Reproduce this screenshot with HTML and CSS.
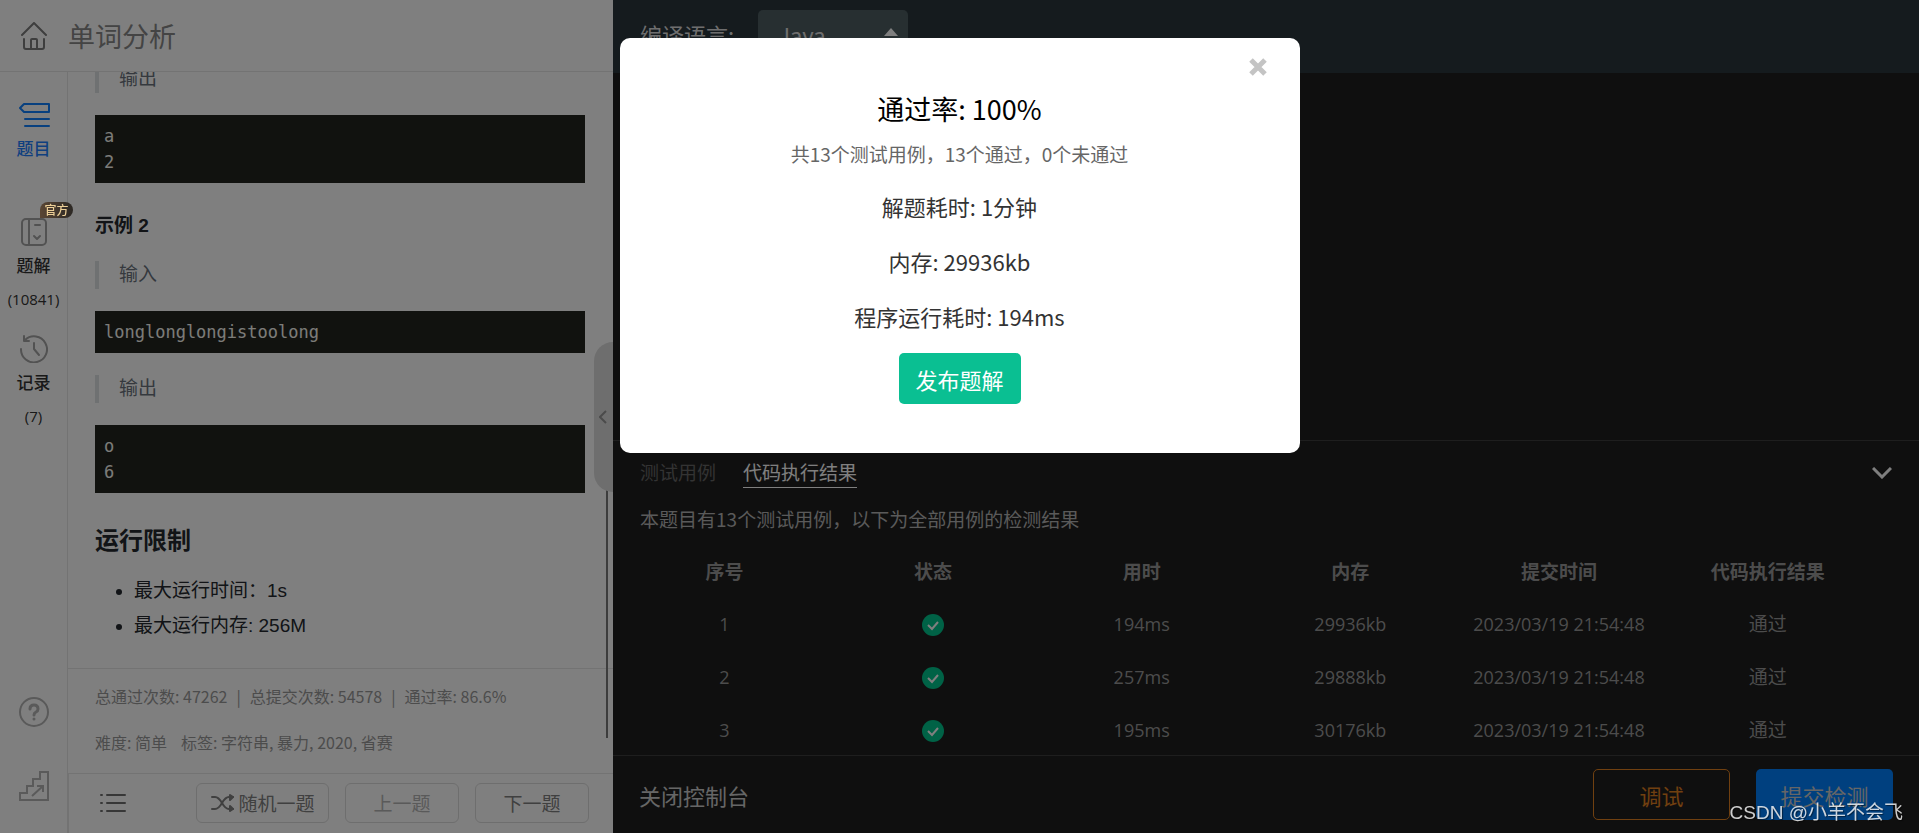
FILE: index.html
```html
<!DOCTYPE html>
<html lang="zh-CN">
<head>
    <meta charset="UTF-8">
    <meta name="viewport" content="width=device-width, initial-scale=1.0">
    <title>单词分析</title>
    <link rel="stylesheet" href="styles.css">
</head>
<body>
    <div class="page">
        <section class="left">
            <header class="left-header">
                <a href="#" class="home" aria-label="首页">
                    <svg width="28" height="28" viewBox="0 0 28 28" fill="none" stroke="#7c7c7c" stroke-width="2" stroke-linecap="round" stroke-linejoin="round">
                        <path d="M2 13 L14 1 L26 13"/>
                        <path d="M4 17 V25 Q4 27 6 27 H22 Q24 27 24 25 V17"/>
                        <path d="M11 26 V18 Q11 17 12 17 H16 Q17 17 17 18 V26"/>
                    </svg>
                </a>
                <h1>单词分析</h1>
            </header>

            <div class="left-body">
                <nav class="sidebar">
                    <a href="#" class="side-item active">
                        <span class="side-icon">
                            <svg width="32" height="26" viewBox="0 0 32 26" fill="none" stroke="#1080ff" stroke-width="2" stroke-linecap="round" stroke-linejoin="round">
                                <path d="M6 2 H31 V10 H6 L2 6 Z"/>
                                <path d="M7 17 H31 M7 24 H31"/>
                            </svg>
                        </span>
                        <span class="side-label">题目</span>
                    </a>
                    <a href="#" class="side-item">
                        <span class="badge">官方</span>
                        <span class="side-icon">
                            <svg width="26" height="28" viewBox="0 0 26 28" fill="none" stroke="#a4a4a4" stroke-width="2" stroke-linecap="round" stroke-linejoin="round">
                                <rect x="1" y="1" width="24" height="26" rx="4"/>
                                <path d="M8 1 V27 M14 7 H19 M13 18 L16 21 L19 18"/>
                            </svg>
                        </span>
                        <span class="side-label">题解</span>
                        <span class="side-count">(10841)</span>
                    </a>
                    <a href="#" class="side-item">
                        <span class="side-icon">
                            <svg width="28" height="28" viewBox="0 0 28 28" fill="none" stroke="#a4a4a4" stroke-width="2" stroke-linecap="round" stroke-linejoin="round">
                                <path d="M1 14 A13 13 0 1 0 5 5"/>
                                <path d="M4 1 V6 H9 M14 8 V14 L19 20"/>
                            </svg>
                        </span>
                        <span class="side-label">记录</span>
                        <span class="side-count">(7)</span>
                    </a>
                    <div class="side-bottom">
                        <a href="#" aria-label="帮助">
                            <svg width="30" height="30" viewBox="0 0 30 30" fill="none" stroke="#b4b4b4" stroke-width="2" stroke-linecap="round">
                                <circle cx="15" cy="15" r="14"/>
                                <path d="M11 12 Q11 8 15 8 Q19 8 19 12 Q19 14 17 15 Q15 16 15 18 M15 22 V22" stroke-width="3"/>
                            </svg>
                        </a>
                        <a href="#" aria-label="进阶">
                            <svg width="30" height="30" viewBox="0 0 30 30" fill="none" stroke="#b4b4b4" stroke-width="2">
                                <path d="M1 29 V22 H8 V15 H14 V8 H21 V1 H29 V29 Z"/>
                                <path d="M13 25 L24 15 M18 15 H24 V21"/>
                            </svg>
                        </a>
                    </div>
                </nav>

                <div class="main">
                    <article class="content">
                        <blockquote>输出</blockquote>
                        <pre>a
2</pre>
                        <h3>示例 2</h3>
                        <blockquote>输入</blockquote>
                        <pre>longlonglongistoolong</pre>
                        <blockquote>输出</blockquote>
                        <pre>o
6</pre>
                        <h2>运行限制</h2>
                        <ul>
                            <li>最大运行时间：1s</li>
                            <li>最大运行内存: 256M</li>
                        </ul>
                    </article>
                    <div class="stats">
                        <p><span>总通过次数: 47262</span><span>|</span><span>总提交次数: 54578</span><span>|</span><span>通过率: 86.6%</span></p>
                        <p class="tags"><span>难度: 简单</span><span>标签: 字符串, 暴力, 2020, 省赛</span></p>
                    </div>
                    <footer class="left-footer">
                        <button class="list-button" aria-label="题目列表">
                            <svg width="26" height="20" viewBox="0 0 26 20" fill="none" stroke="#6e6e6e" stroke-width="2" stroke-linecap="round">
                                <path d="M1 2 H2 M7 2 H25 M1 10 H2 M7 10 H25 M1 18 H2 M7 18 H25"/>
                            </svg>
                        </button>
                        <button class="nav-button random">
                            <svg width="24" height="18" viewBox="0 0 24 18" fill="none" stroke="#808080" stroke-width="2" stroke-linecap="round" stroke-linejoin="round">
                                <path d="M1 3 H4 C11 3 11 15 18 15 H22 M1 15 H4 C11 15 11 3 18 3 H22"/>
                                <path d="M19 1 L22 3 L19 6 Z M19 12 L22 15 L19 17 Z"/>
                            </svg>
                            随机一题
                        </button>
                        <button class="nav-button prev">上一题</button>
                        <button class="nav-button">下一题</button>
                    </footer>
                </div>
            </div>

            <div class="scrollbar"></div>
            <button class="collapse" aria-label="收起">
                <svg width="8" height="14" viewBox="0 0 8 14" fill="none" stroke="#969696" stroke-width="2">
                    <path d="M7 1 L1 7 L7 13"/>
                </svg>
            </button>
        </section>

        <section class="right">
            <header class="right-header">
                <label for="language">编译语言:</label>
                <div class="select-box">
                    <select id="language">
                        <option>Java</option>
                        <option>C++</option>
                        <option>Python3</option>
                    </select>
                    <span class="arrow"></span>
                </div>
            </header>
            <div class="editor"></div>
            <div class="console">
                <div class="tabs">
                    <button class="tab">测试用例</button>
                    <button class="tab current">代码执行结果</button>
                    <button class="toggle" aria-label="折叠">
                        <svg width="20" height="12" viewBox="0 0 20 12" fill="none" stroke="#fff" stroke-width="3">
                            <path d="M1 1 L10 10 L19 1"/>
                        </svg>
                    </button>
                </div>
                <p class="summary">本题目有13个测试用例，以下为全部用例的检测结果</p>
                <table>
                    <thead>
                        <tr><th>序号</th><th>状态</th><th>用时</th><th>内存</th><th>提交时间</th><th>代码执行结果</th></tr>
                    </thead>
                    <tbody>
                        <tr>
                            <td>1</td>
                            <td><svg class="ok" viewBox="0 0 22 22"><circle cx="11" cy="11" r="11"/><path d="M6 11 L10 15 L16 8"/></svg></td>
                            <td>194ms</td>
                            <td>29936kb</td>
                            <td>2023/03/19 21:54:48</td>
                            <td class="result">通过</td>
                        </tr>
                        <tr>
                            <td>2</td>
                            <td><svg class="ok" viewBox="0 0 22 22"><circle cx="11" cy="11" r="11"/><path d="M6 11 L10 15 L16 8"/></svg></td>
                            <td>257ms</td>
                            <td>29888kb</td>
                            <td>2023/03/19 21:54:48</td>
                            <td class="result">通过</td>
                        </tr>
                        <tr>
                            <td>3</td>
                            <td><svg class="ok" viewBox="0 0 22 22"><circle cx="11" cy="11" r="11"/><path d="M6 11 L10 15 L16 8"/></svg></td>
                            <td>195ms</td>
                            <td>30176kb</td>
                            <td>2023/03/19 21:54:48</td>
                            <td class="result">通过</td>
                        </tr>
                    </tbody>
                </table>
            </div>
            <footer class="right-footer">
                <button class="close-console">关闭控制台</button>
                <button class="action debug">调试</button>
                <button class="action submit">提交检测</button>
            </footer>
        </section>
    </div>

    <div class="mask">
        <div class="modal" role="dialog" aria-labelledby="modalTitle">
            <button class="modal-close" aria-label="关闭">
                <svg width="18" height="18" viewBox="0 0 18 18" stroke="#c4c4c4" stroke-width="5">
                    <path d="M2 2 L16 16 M16 2 L2 16"/>
                </svg>
            </button>
            <h2 id="modalTitle">通过率: 100%</h2>
            <p class="modal-sub">共13个测试用例，13个通过，0个未通过</p>
            <p>解题耗时: 1分钟</p>
            <p>内存: 29936kb</p>
            <p>程序运行耗时: 194ms</p>
            <button class="publish">发布题解</button>
        </div>
    </div>
    <div class="watermark">CSDN @小羊不会飞</div>
</body>
</html>
```

FILE: styles.css
```css
* {
    margin: 0;
    padding: 0;
    box-sizing: border-box;
}

body {
    font-family: 'Noto Sans CJK SC', sans-serif;
    font-size: 19px;
    overflow: hidden;
}

button, select {
    font-family: inherit;
    font-size: inherit;
    background: none;
    border: none;
    cursor: pointer;
}

a {
    text-decoration: none;
    color: inherit;
}

svg {
    display: block;
}

.page {
    display: flex;
    height: 100vh;
}

/* left panel */
.left {
    position: relative;
    width: calc(32% - 1px);
    flex-shrink: 0;
    display: flex;
    flex-direction: column;
    background: #fff;
}

.left-header {
    height: 72px;
    flex-shrink: 0;
    display: flex;
    align-items: center;
    gap: 20px;
    padding-left: 20px;
    border-bottom: 1px solid #e6e6e6;
}

.left-header h1 {
    font-size: 27px;
    font-weight: 400;
    color: #888;
}

.left-body {
    flex: 1;
    min-height: 0;
    display: flex;
}

.sidebar {
    width: 68px;
    flex-shrink: 0;
    display: flex;
    flex-direction: column;
    gap: 19px;
    padding: 28px 0 32px;
    border-right: 1px solid #e6e6e6;
}

.side-item {
    position: relative;
    min-height: 98px;
    display: flex;
    flex-direction: column;
    align-items: center;
    color: #333;
}

.side-item.active {
    color: #1e80ff;
}

.side-icon {
    height: 30px;
    display: flex;
    align-items: center;
}

.side-label {
    font-size: 17px;
    font-weight: 500;
    line-height: 36px;
}

.side-count {
    font-family: 'Open Sans', sans-serif;
    font-size: 15px;
    line-height: 32px;
}

.badge {
    position: absolute;
    top: -15px;
    left: 40px;
    z-index: 1;
    width: 33px;
    font-size: 12px;
    font-weight: 500;
    line-height: 16px;
    text-align: center;
    color: #eccf97;
    background: linear-gradient(90deg, #5a4634, #2c2824);
    border-radius: 8px 8px 8px 0;
}

.side-bottom {
    margin-top: auto;
    display: flex;
    flex-direction: column;
    align-items: center;
    gap: 44px;
}

.main {
    flex: 1;
    min-width: 0;
    display: flex;
    flex-direction: column;
}

.content {
    flex: 1;
    min-height: 0;
    overflow: hidden;
    padding: 0 28px 0 27px;
    font-family: 'Liberation Sans', 'Noto Sans CJK SC', sans-serif;
    color: #24292e;
}

.content blockquote {
    margin: 22px 0;
    padding-left: 20px;
    line-height: 28px;
    color: #6a737d;
    border-left: 4px solid #dfe2e5;
}

.content blockquote:first-child {
    margin-top: -7px;
}

.content pre {
    padding: 8px 9px;
    font-family: 'DejaVu Sans Mono', monospace;
    font-size: 17px;
    line-height: 26px;
    color: #f8f8f2;
    background: #23241f;
}

.content h3 {
    margin-top: 30px;
    font-size: 19px;
    line-height: 26px;
}

.content h2 {
    margin-top: 30px;
    font-size: 24px;
    line-height: 36px;
}

.content ul {
    margin-top: 14px;
    padding-left: 39px;
}

.content li {
    line-height: 35px;
}

.stats {
    height: 105px;
    display: flex;
    flex-direction: column;
    justify-content: center;
    gap: 22px;
    padding: 0 0 4px 27px;
    font-size: 16px;
    line-height: 24px;
    color: #999;
    border-top: 1px solid #e6e6e6;
}

.stats p {
    display: flex;
    gap: 9px;
}

.stats .tags {
    gap: 14px;
}

.left-footer {
    height: 60px;
    display: flex;
    align-items: center;
    gap: 16px;
    padding: 0 24px 2px 31px;
    border-top: 1px solid #e6e6e6;
    border-left: 1px solid #e6e6e6;
}

.list-button {
    margin-right: auto;
}

.nav-button {
    width: 114px;
    height: 40px;
    display: flex;
    align-items: center;
    justify-content: center;
    gap: 4px;
    color: #808080;
    border: 1px solid #dcdcdc;
    border-radius: 6px;
}

.random {
    width: 133px;
}

.prev {
    color: #b4b4b4;
}

.scrollbar {
    position: absolute;
    right: 5px;
    bottom: 95px;
    width: 2px;
    height: 250px;
    background: #7a7a7a;
}

.collapse {
    position: absolute;
    right: 0;
    top: 342px;
    width: 19px;
    height: 150px;
    padding-left: 5px;
    background: #dcdcdc;
    border-radius: 19px 0 0 19px;
}

/* right panel */
.right {
    flex: 1;
    min-width: 0;
    display: flex;
    flex-direction: column;
    background: #1e1e1e;
}

.right-header {
    height: 73px;
    flex-shrink: 0;
    display: flex;
    align-items: center;
    gap: 24px;
    padding: 0 0 2px 27px;
    font-size: 22px;
    color: #ddd;
    background: #2a363d;
}

.right-header label {
    padding-bottom: 4px;
}

.select-box {
    position: relative;
}

.select-box select {
    appearance: none;
    width: 150px;
    height: 52px;
    padding: 0 0 4px 20px;
    color: #ddd;
    background: #4e5e62;
    border-radius: 5px;
}

.arrow {
    position: absolute;
    right: 10px;
    top: 18px;
    border: 7px solid transparent;
    border-top: none;
    border-bottom: 8px solid #fff;
}

.editor {
    flex: 1;
}

.console {
    height: 315px;
    overflow: hidden;
    border-top: 1px solid #3c3c3c;
}

.tabs {
    display: flex;
    align-items: center;
    gap: 27px;
    height: 63px;
    padding: 0 27px;
}

.tab {
    height: 30px;
    line-height: 28px;
    color: #666;
    border-bottom: 1px solid transparent;
}

.tab.current {
    color: #fff;
    border-color: #fff;
}

.toggle {
    margin-left: auto;
}

.summary {
    padding-left: 27px;
    line-height: 30px;
    color: #b4b4b4;
}

table {
    width: calc(100% - 54px);
    margin-left: 7px;
    margin-top: 10px;
    table-layout: fixed;
    border-collapse: collapse;
    color: #999;
}

th, td {
    height: 53px;
    text-align: center;
    vertical-align: middle;
}

td {
    font-family: 'Open Sans', 'Noto Sans CJK SC', sans-serif;
    font-size: 18px;
    line-height: 24px;
}

td.result {
    font-size: 19px;
}

.ok {
    width: 22px;
    height: 22px;
    margin: 3px auto 0;
    fill: #00c48c;
}

.ok path {
    fill: none;
    stroke: #fff;
    stroke-width: 2;
}

.right-footer {
    height: 78px;
    flex-shrink: 0;
    display: flex;
    align-items: center;
    gap: 26px;
    padding: 0 26px;
    font-size: 22px;
    color: #ccc;
    border-top: 1px solid #3c3c3c;
}

.close-console {
    margin-right: auto;
    color: #ccc;
}

.action {
    width: 137px;
    height: 51px;
    border-radius: 5px;
}

.debug {
    color: #e08020;
    border: 1px solid #e08020;
}

.submit {
    color: #ccc;
    background: #0080ff;
}

/* result dialog */
.mask {
    position: fixed;
    inset: 0;
    padding-top: 38px;
    background: rgba(0, 0, 0, 0.5);
}

.modal {
    position: relative;
    width: 680px;
    margin: 0 auto;
    padding: 51px 20px 49px;
    text-align: center;
    font-size: 22px;
    color: #333;
    background: #fff;
    border-radius: 10px;
}

.modal h2 {
    font-size: 27px;
    font-weight: 400;
    line-height: 40px;
    color: #000;
}

.modal p {
    margin-bottom: 19px;
    line-height: 36px;
}

.modal .modal-sub {
    margin: 7px 0 16px;
    font-size: 19px;
    color: #666;
}

.modal-close {
    position: absolute;
    top: 20px;
    right: 33px;
}

.publish {
    width: 122px;
    height: 51px;
    color: #fff;
    background: #0abf92;
    border-radius: 5px;
}

.watermark {
    position: fixed;
    right: 16px;
    bottom: 5px;
    font-family: 'Liberation Sans', 'Noto Sans CJK SC', sans-serif;
    line-height: 30px;
    color: rgba(255, 255, 255, 0.8);
    text-shadow: 1px 1px 1px rgba(0, 0, 0, 0.5);
}
```
